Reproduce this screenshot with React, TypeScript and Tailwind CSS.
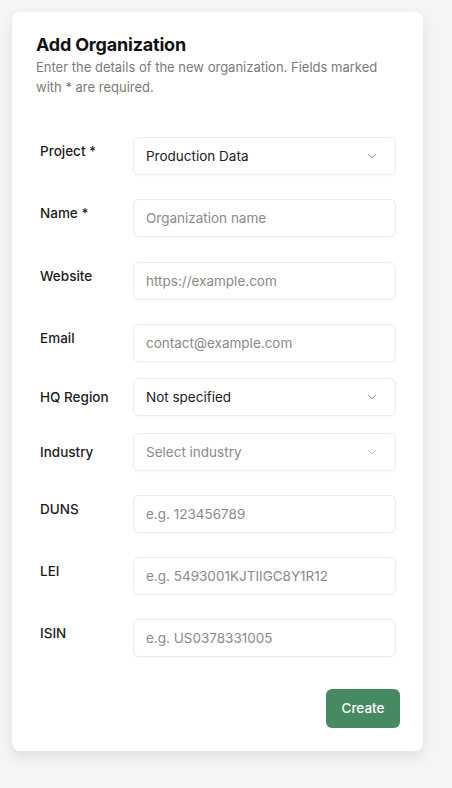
import { ChevronDown } from "lucide-react";

type Field = {
  label: string;
  kind: "input" | "select";
  value?: string;
  placeholder?: string;
  mt: string;
  center?: boolean;
};

const fields: Field[] = [
  { label: "Project *", kind: "select", value: "Production Data", mt: "mt-0" },
  { label: "Name *", kind: "input", placeholder: "Organization name", mt: "mt-[24px]" },
  { label: "Website", kind: "input", placeholder: "https://example.com", mt: "mt-[25px]" },
  { label: "Email", kind: "input", placeholder: "contact@example.com", mt: "mt-[24px]" },
  { label: "HQ Region", kind: "select", value: "Not specified", mt: "mt-[16px]", center: true },
  { label: "Industry", kind: "select", placeholder: "Select industry", mt: "mt-[17px]", center: true },
  { label: "DUNS", kind: "input", placeholder: "e.g. 123456789", mt: "mt-[24px]" },
  { label: "LEI", kind: "input", placeholder: "e.g. 5493001KJTIIGC8Y1R12", mt: "mt-[24px]" },
  { label: "ISIN", kind: "input", placeholder: "e.g. US0378331005", mt: "mt-[24px]" },
];

const FormRow = ({ field }: { field: Field }) => {
  return (
    <div className={`flex px-1 ${field.center ? "items-center" : "items-start"} ${field.mt}`}>
      <label
        className={`w-[93px] shrink-0 text-[13.5px] font-medium leading-[17px] text-[#1c1c1c] ${field.center ? "" : "pt-[6px]"}`}
      >
        {field.label}
      </label>
      {field.kind === "select" ? (
        <div className="flex h-[38px] flex-1 items-center justify-between rounded-md border border-[#ececec] bg-white pl-3 pr-4 shadow-[0_1px_2px_rgba(0,0,0,0.03)]">
          <span className={`text-[13.5px] ${field.value ? "text-[#1c1c1c]" : "text-[#8a8a8a]"}`}>
            {field.value ?? field.placeholder}
          </span>
          <ChevronDown className={`h-[14px] w-[14px] ${field.value ? "text-[#777]" : "text-[#aaa]"}`} strokeWidth={1.6} />
        </div>
      ) : (
        <input
          className="h-[38px] flex-1 rounded-md border border-[#ececec] bg-white px-3 text-[13.5px] text-[#1c1c1c] shadow-[0_1px_2px_rgba(0,0,0,0.03)] outline-none placeholder:text-[#8a8a8a]"
          placeholder={field.placeholder}
        />
      )}
    </div>
  );
};

export default function App() {
  return (
    <div className="min-h-[788px] bg-[#f5f5f5] px-3 pt-3 font-['Inter',sans-serif]">
      <div className="w-[411px] rounded-lg bg-white px-6 pb-[23px] pt-[21px] shadow-[0_6px_14px_rgba(0,0,0,0.09)]">
        <h1 className="text-[18px] font-bold leading-[24px] tracking-[-0.2px] text-[#111]">Add Organization</h1>
        <p className="text-[13px] leading-[20px] text-[#7a7a7a]">
          Enter the details of the new organization. Fields marked with * are required.
        </p>
        <div className="mt-[40px] w-[364px]">
          {fields.map((f) => (
            <FormRow key={f.label} field={f} />
          ))}
          <div className="mt-[32px] flex justify-end">
            <button className="h-[39px] w-[74px] rounded-md bg-[#468a62] text-[13.5px] font-medium text-white">
              Create
            </button>
          </div>
        </div>
      </div>
    </div>
  );
}
